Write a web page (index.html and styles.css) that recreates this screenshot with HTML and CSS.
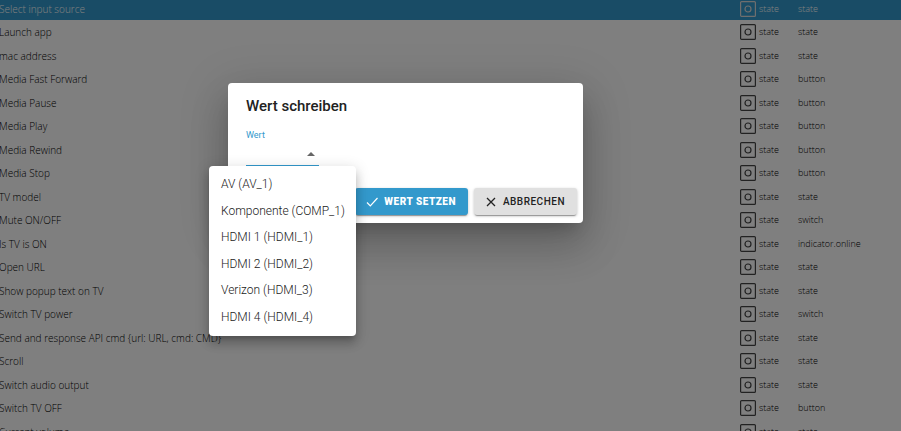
FILE: index.html
```html
<!DOCTYPE html>
<html lang="de">
<head>
    <meta charset="UTF-8">
    <meta name="viewport" content="width=device-width, initial-scale=1.0">
    <title>Objekte - Wert schreiben</title>
    <link rel="stylesheet" href="styles.css">
</head>
<body>
    <svg class="sprite" width="0" height="0" aria-hidden="true">
        <symbol id="state" viewBox="0 0 16 16">
            <rect x="0.6" y="0.6" width="14.8" height="14.8" rx="1" fill="none" stroke="currentColor" stroke-width="1.2"/>
            <circle cx="8" cy="8" r="3" fill="none" stroke="currentColor" stroke-width="1.2"/>
        </symbol>
    </svg>

    <main class="objects">
        <table class="object-table">
            <colgroup><col><col class="col-type"><col class="col-role"></colgroup>
            <tbody id="objectRows"></tbody>
        </table>
    </main>

    <div class="backdrop"></div>

    <div class="dialog" role="dialog" aria-labelledby="dialogTitle">
        <h2 id="dialogTitle">Wert schreiben</h2>
        <div class="field">
            <label for="value">Wert</label>
            <div class="select-wrap">
                <select id="value" name="value"><option value=""></option></select>
                <svg class="arrow" viewBox="0 0 8 4" aria-hidden="true"><path d="M0 4l4-4 4 4z" fill="currentColor"/></svg>
            </div>
        </div>
        <div class="actions">
            <button type="button" class="btn primary">
                <svg viewBox="0 0 12 12" aria-hidden="true"><path d="M1 6.5L4.3 9.8 11.5 2" fill="none" stroke="currentColor" stroke-width="1.2"/></svg>
                Wert setzen
            </button>
            <button type="button" class="btn">
                <svg viewBox="0 0 12 12" aria-hidden="true"><path d="M2 2l8 8M10 2l-8 8" fill="none" stroke="currentColor" stroke-width="1.3"/></svg>
                Abbrechen
            </button>
        </div>
    </div>

    <ul class="menu" role="listbox" aria-label="Wert">
        <li role="option">AV (AV_1)</li>
        <li role="option">Komponente (COMP_1)</li>
        <li role="option">HDMI 1 (HDMI_1)</li>
        <li role="option">HDMI 2 (HDMI_2)</li>
        <li role="option">Verizon (HDMI_3)</li>
        <li role="option">HDMI 4 (HDMI_4)</li>
    </ul>

    <script>
        const objects = [
            ['Select input source', 'state'],
            ['Launch app', 'state'],
            ['mac address', 'state'],
            ['Media Fast Forward', 'button'],
            ['Media Pause', 'button'],
            ['Media Play', 'button'],
            ['Media Rewind', 'button'],
            ['Media Stop', 'button'],
            ['TV model', 'state'],
            ['Mute ON/OFF', 'switch'],
            ['Is TV is ON', 'indicator.online'],
            ['Open URL', 'state'],
            ['Show popup text on TV', 'state'],
            ['Switch TV power', 'switch'],
            ['Send and response API cmd {url: URL, cmd: CMD}', 'state'],
            ['Scroll', 'state'],
            ['Switch audio output', 'state'],
            ['Switch TV OFF', 'button'],
            ['Current volume', 'state']
        ];

        document.getElementById('objectRows').innerHTML = objects.map(([name, role], i) => `
            <tr class="${i === 0 ? 'selected' : ''}">
                <td class="name">${name}</td>
                <td><span class="type"><svg aria-hidden="true"><use href="#state"/></svg>state</span></td>
                <td>${role}</td>
            </tr>
        `).join('');
    </script>
</body>
</html>
```
FILE: styles.css
```css
* { box-sizing: border-box; }
body { margin: 0; height: 100vh; overflow: hidden; font-family: Roboto, "Liberation Sans", sans-serif; background: white; }
.sprite { position: absolute; }

.objects { margin: -3px 0 0 -1px; }
.object-table { width: 100%; border-collapse: collapse; table-layout: fixed; font: 300 9px/12px "Open Sans", sans-serif; color: black; }
.col-type { width: 58px; }
.col-role { width: 103px; }
tr { height: 23px; }
tr:nth-child(even) { height: 24px; }
td { padding: 0; white-space: nowrap; }
.name { font-size: 10px; }
.selected { background: #3399cc; color: white; }
.type { display: flex; align-items: center; gap: 3px; }
.type svg { width: 16px; height: 16px; color: #444; }
.selected svg { color: #ddd; }

.backdrop { position: absolute; inset: 0; background: rgba(0, 0, 0, 0.5); }

.dialog { position: absolute; left: 228px; top: 83px; width: 355px; padding: 14px 6px 8px; border-radius: 4px; background: white; box-shadow: 0 11px 15px -7px rgba(0,0,0,0.2), 0 24px 38px 3px rgba(0,0,0,0.14), 0 9px 46px 8px rgba(0,0,0,0.12); }
h2 { margin: 0 12px; font-size: 15px; line-height: 18px; font-weight: 500; color: #222; }
.field { width: 73px; margin: 14px 12px 22px; }
label { display: block; font-size: 9px; line-height: 12px; color: #3399cc; }
.select-wrap { position: relative; }
select { display: block; width: 100%; height: 25px; padding: 0; border: 0; border-bottom: 1px solid #3399cc; border-radius: 0; appearance: none; background: transparent; font: inherit; }
.arrow { position: absolute; right: 4px; top: 11px; width: 8px; height: 4px; color: #666; }

.actions { display: flex; justify-content: flex-end; gap: 6px; }
.btn { display: flex; align-items: center; gap: 6px; height: 27px; padding: 0 12px 0 11px; border: 0; border-radius: 3px; background: #e0e0e0; color: #222; font: 500 10px/16px Roboto, sans-serif; letter-spacing: 0.5px; text-transform: uppercase; box-shadow: 0 2px 1px -1px rgba(0,0,0,0.3), 0 1px 3px rgba(0,0,0,0.25); }
.btn svg { width: 12px; height: 12px; }
.primary { background: #3399cc; color: white; font-weight: 900; }

.menu { position: absolute; left: 209px; top: 166px; display: flex; flex-direction: column; height: 170px; margin: 0; padding: 5px 11px 6px 12px; border-radius: 4px; background: white; box-shadow: 0 5px 5px -3px rgba(0,0,0,0.2), 0 8px 10px 1px rgba(0,0,0,0.14), 0 3px 14px 2px rgba(0,0,0,0.12); list-style: none; font-size: 12px; font-weight: 300; color: #222; }
.menu li { flex: 1; display: flex; align-items: center; white-space: nowrap; }
```
